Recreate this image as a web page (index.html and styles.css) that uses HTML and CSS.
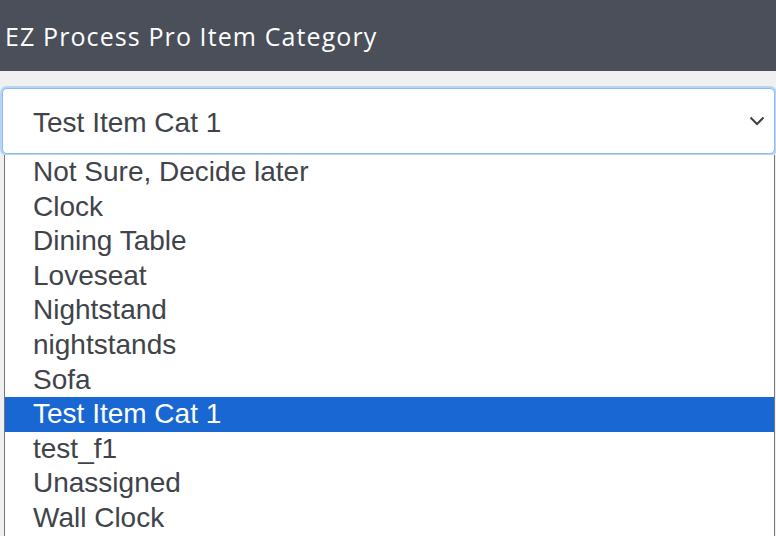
FILE: index.html
```html
<!DOCTYPE html>
<html lang="en">
<head>
    <meta charset="UTF-8">
    <meta name="viewport" content="width=device-width, initial-scale=1.0">
    <title>EZ Process Pro Item Category</title>
    <link rel="stylesheet" href="styles.css">
</head>
<body>

    <div class="header">
        <h2 class="title">EZ Process Pro Item Category</h2>
    </div>

    <div class="content">
        <!-- select aperto con la lista delle categorie -->
        <div class="picker">
            <div class="select">
                <span class="select-value">Test Item Cat 1</span>
                <svg class="chevron" width="16" height="10" viewBox="0 0 16 10">
                    <path d="M1.5 1.5 L8 8 L14.5 1.5" fill="none" stroke="#3d4046" stroke-width="2"/>
                </svg>
            </div>
            <ul class="options">
                <li>Not Sure, Decide later</li>
                <li>Clock</li>
                <li>Dining Table</li>
                <li>Loveseat</li>
                <li>Nightstand</li>
                <li>nightstands</li>
                <li>Sofa</li>
                <li class="selected">Test Item Cat 1</li>
                <li>test_f1</li>
                <li>Unassigned</li>
                <li>Wall Clock</li>
            </ul>
        </div>
    </div>

</body>
</html>
```

FILE: styles.css
```css
html, body { margin: 0; padding: 0; height: 100%; overflow: hidden; }
body { background: #f0f0f0; font-family: "Liberation Sans", Arial, sans-serif; }
.header { height: 71px; background: #4a4f5a; display: flex; align-items: center; padding: 0 5px; }
.title { margin: 0; color: #ffffff; font-family: "Open Sans", sans-serif; font-weight: 400; font-size: 25px; letter-spacing: 1.1px; }
.content { padding: 17px 1px 0 2px; }
.picker { position: relative; }
.select { display: flex; align-items: center; justify-content: space-between; height: 64px; margin: 0; padding: 0 9px 0 30px; background: #fff; border: 1px solid #8fbaf0; border-radius: 5px; box-shadow: 0 0 0 2px #b6d4f6; }
.select-value { font-size: 28px; color: #40444a; padding-top: 4px; }
.options { list-style: none; margin: 0; padding: 0; position: absolute; top: 67px; left: 2px; right: 0; background: #fff; border: 1px solid #767676; border-top: none; }
.options li { height: 34.6px; line-height: 34.6px; padding-left: 28px; font-size: 28px; color: #40444a; }
.options li.selected { background: #1967d2; color: #fff; }
```
